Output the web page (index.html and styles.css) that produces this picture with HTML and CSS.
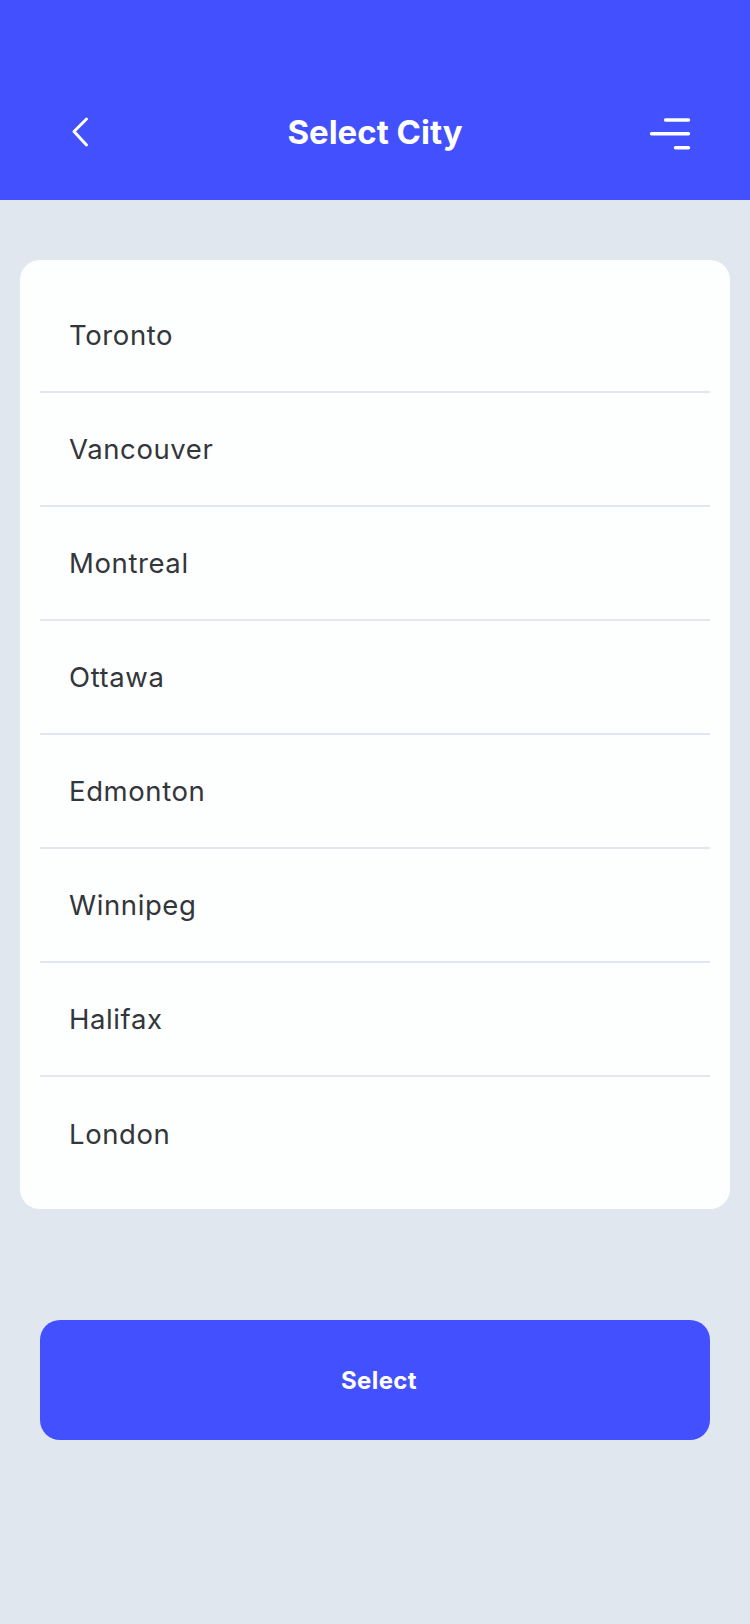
FILE: index.html
```html
<!DOCTYPE html>
<html>
<head>
<meta charset="utf-8">
<link rel="stylesheet" href="styles.css">
</head>
<body>
<header class="topbar">
  <div class="bar-row">
    <button class="icon-btn back" aria-label="Back">
      <svg width="20" height="32" viewBox="0 0 20 32"><path d="M16.5 3 L4 15.5 L16.5 29" fill="none" stroke="#fff" stroke-width="3" stroke-linecap="round" stroke-linejoin="round"/></svg>
    </button>
    <h1 class="title">Select City</h1>
    <button class="icon-btn menu" aria-label="Menu">
      <svg width="44" height="36" viewBox="0 0 44 36"><g stroke="#fff" stroke-width="3.4" stroke-linecap="round"><line x1="17.5" y1="6" x2="40.5" y2="6"/><line x1="3.5" y1="19.7" x2="40.5" y2="19.7"/><line x1="27.5" y1="33.7" x2="40.5" y2="33.7"/></g></svg>
    </button>
  </div>
</header>
<main class="content">
  <ul class="city-list">
    <li class="city">Toronto</li>
    <li class="city">Vancouver</li>
    <li class="city">Montreal</li>
    <li class="city">Ottawa</li>
    <li class="city">Edmonton</li>
    <li class="city">Winnipeg</li>
    <li class="city">Halifax</li>
    <li class="city">London</li>
  </ul>
  <button class="select-btn"><span class="select-label">Select</span></button>
</main>
</body>
</html>
```
FILE: styles.css
```css
* { box-sizing: border-box; }
html, body {
  margin: 0;
  padding: 0;
}
body {
  width: 750px;
  min-height: 1624px;
  background: #e0e7ef;
  font-family: Inter, "Noto Sans", sans-serif;
}
.topbar {
  background: #4350fe;
  height: 200px;
  display: flex;
  align-items: flex-end;
  padding-bottom: 36px;
}
.bar-row {
  width: 100%;
  height: 64px;
  display: grid;
  grid-template-columns: 1fr auto 1fr;
  align-items: center;
  padding: 0 58px;
}
.icon-btn {
  background: none;
  border: 0;
  padding: 0;
  display: flex;
  cursor: pointer;
}
.back { justify-self: start; margin-left: 12px; }
.menu { justify-self: end; }
.title {
  margin: 0;
  color: #fff;
  font-size: 33px;
  font-weight: 700;
  letter-spacing: 0;
}
.content {
  padding: 60px 20px 0;
  display: flex;
  flex-direction: column;
}
.city-list {
  list-style: none;
  margin: 0;
  background: #fdfefe;
  border-radius: 20px;
  padding: 19px 20px 18px;
}
.city {
  height: 114px;
  display: flex;
  align-items: center;
  padding-left: 29px;
  font-size: 27.5px;
  letter-spacing: 0.6px;
  color: #33363b;
  border-bottom: 2px solid #e1e6f1;
}
.city:last-child { border-bottom: 0; }
.select-btn {
  margin: 111px 20px 0;
  height: 120px;
  border: 0;
  border-radius: 20px;
  background: #4350fe;
  display: flex;
  align-items: center;
  justify-content: center;
  padding: 0 0 0 8px;
}
.select-label {
  color: #fff;
  font-family: Inter, "Noto Sans", sans-serif;
  font-size: 24px;
  font-weight: 700;
  letter-spacing: 0.4px;
}
```
